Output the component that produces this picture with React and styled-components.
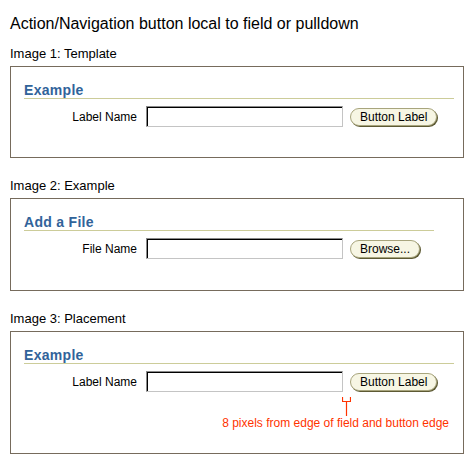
import React from 'react';
import styled, { createGlobalStyle } from 'styled-components';

const GlobalStyle = createGlobalStyle`
  body {
    margin: 0;
    background: #ffffff;
    font-family: "Liberation Sans", Arial, sans-serif;
    color: #000000;
  }
`;

const Page = styled.div`
  width: 474px;
  padding: 15px 0 0 10px;
  box-sizing: border-box;
`;

const Title = styled.h1`
  margin: 0;
  font-size: 16px;
  line-height: 18px;
  font-weight: normal;
`;

const Caption = styled.div`
  margin: ${({ $first }) => ($first ? '13px' : '20px')} 0 5px;
  font-size: 13px;
  line-height: 15px;
`;

const Panel = styled.div`
  width: 454px;
  box-sizing: border-box;
  border: 1px solid #766b5c;
  padding: 15px 9px ${({ $bottom }) => $bottom}px 13px;
`;

const Heading = styled.h2`
  margin: 0 ${({ $trim }) => $trim || 0}px 0 0;
  height: 16px;
  font-size: 14px;
  line-height: 16px;
  font-weight: bold;
  letter-spacing: 0.3px;
  color: #31639a;
  border-bottom: 1px solid #cccc99;
`;

const FieldRow = styled.div`
  display: grid;
  grid-template-columns: 113px 197px auto;
  column-gap: 9px;
  align-items: center;
  margin-top: 7px;
`;

const Label = styled.label`
  font-size: 12px;
  text-align: right;
`;

const Field = styled.input`
  height: 21px;
  box-sizing: border-box;
  margin: 0;
  padding: 0 3px;
  border-style: solid;
  border-width: 1px;
  border-color: #8a8a8a #c4c4c4 #c4c4c4 #8a8a8a;
  box-shadow: inset 1px 1px 0 #000000;
  background: #ffffff;
  outline: none;
`;

const PillButton = styled.button`
  justify-self: start;
  margin-left: -2px;
  height: 18px;
  padding: 0 9px;
  box-sizing: border-box;
  border: 1px solid #a8a57d;
  border-radius: 9px;
  background: #f7f6e4;
  box-shadow: 1px 1px 0 #5d5a34;
  font-family: "Liberation Sans", Arial, sans-serif;
  font-size: 12px;
  line-height: 16px;
  color: #000000;
  cursor: pointer;
`;

const Annotation = styled.div`
  display: flex;
  flex-direction: column;
  margin-top: 5px;
`;

const BracketMark = styled.svg`
  display: block;
  margin-left: 318px;
`;

const Note = styled.div`
  margin-right: 5px;
  text-align: right;
  font-size: 12px;
  line-height: 14px;
  color: #ff3300;
  white-space: nowrap;
`;

const Bracket = () => (
  <BracketMark width="9" height="19" viewBox="0 0 9 19">
    <path d="M0.5 0V4.5H8.5V0M4.5 4.5V19" fill="none" stroke="#ff3300" strokeWidth="1.2" />
  </BracketMark>
);

const Example = ({ title, trim, label, button, bottom, children }) => (
  <Panel $bottom={bottom}>
    <Heading $trim={trim}>{title}</Heading>
    <FieldRow>
      <Label>{label}</Label>
      <Field type="text" />
      <PillButton>{button}</PillButton>
    </FieldRow>
    {children}
  </Panel>
);

export default function App() {
  return (
    <>
      <GlobalStyle />
      <Page>
        <Title>Action/Navigation button local to field or pulldown</Title>

        <Caption $first>Image 1: Template</Caption>
        <Example title="Example" label="Label Name" button="Button Label" bottom={30} />

        <Caption>Image 2: Example</Caption>
        <Example title="Add a File" trim={20} label="File Name" button="Browse..." bottom={31} />

        <Caption>Image 3: Placement</Caption>
        <Example title="Example" label="Label Name" button="Button Label" bottom={23}>
          <Annotation>
            <Bracket />
            <Note>8 pixels from edge of field and button edge</Note>
          </Annotation>
        </Example>
      </Page>
    </>
  );
}
